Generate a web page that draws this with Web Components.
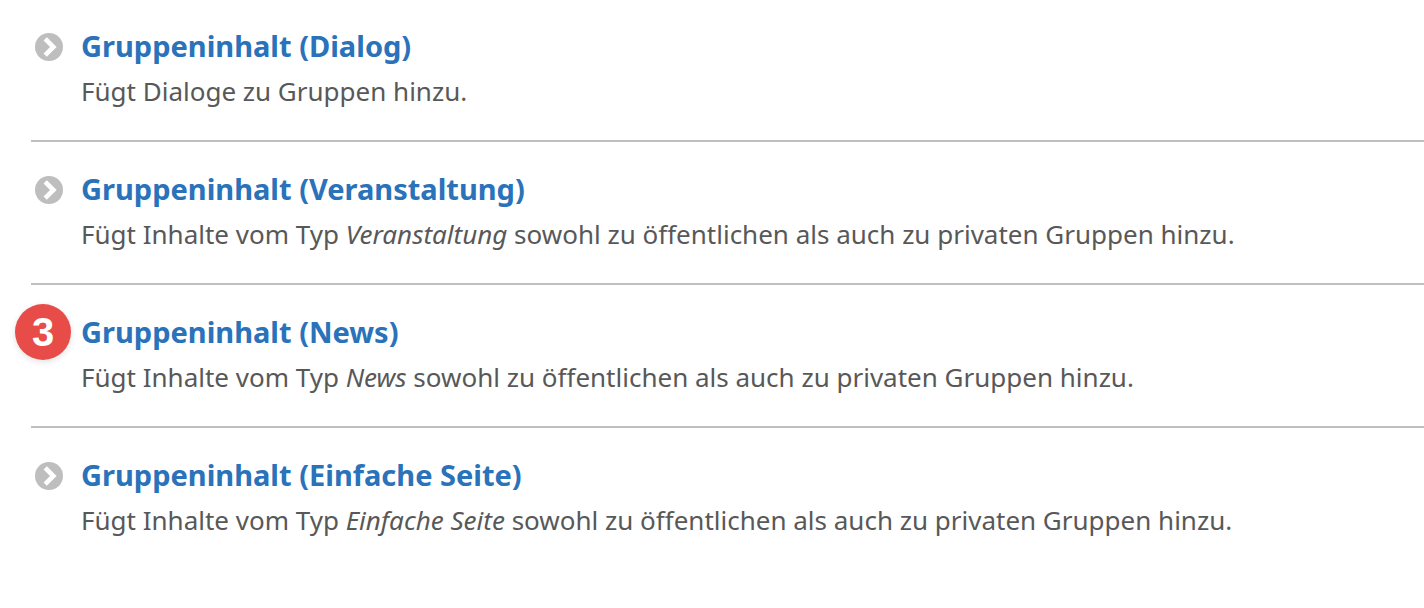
<!DOCTYPE html>
<html lang="de">
<head>
<meta charset="utf-8">
<meta name="viewport" content="width=device-width, initial-scale=1">
<title>Gruppeninhalt</title>
<style>
	body {
		margin: 0;
		background: #fff;
		color: #585858;
		font: 26px/32px "Noto Sans", "Open Sans", sans-serif;
	}
</style>
</head>
<body>
<content-list>
	<content-item href="#dialog" label="Gruppeninhalt (Dialog)">Fügt Dialoge zu Gruppen hinzu.</content-item>
	<content-item href="#veranstaltung" label="Gruppeninhalt (Veranstaltung)">Fügt Inhalte vom Typ <em>Veranstaltung</em> sowohl zu öffentlichen als auch zu privaten Gruppen hinzu.</content-item>
	<content-item href="#news" label="Gruppeninhalt (News)" step="3">Fügt Inhalte vom Typ <em>News</em> sowohl zu öffentlichen als auch zu privaten Gruppen hinzu.</content-item>
	<content-item href="#seite" label="Gruppeninhalt (Einfache Seite)">Fügt Inhalte vom Typ <em>Einfache Seite</em> sowohl zu öffentlichen als auch zu privaten Gruppen hinzu.</content-item>
</content-list>
<script>
class ContentList extends HTMLElement {
	constructor() {
		super();
		this.attachShadow({ mode: 'open' });
		this.shadowRoot.innerHTML = `
      <style>
        :host {
          display: flex;
          flex-direction: column;
          gap: 1px;
          padding-left: 31px;
        }
        ::slotted(:not(:last-child)) {
          border-bottom: 2px solid #bfbfbf;
        }
      </style>
      <slot></slot>
    `;
	}

	connectedCallback() {
		this.setAttribute('role', 'list');
	}
}

class StepBadge extends HTMLElement {
	constructor() {
		super();
		this.attachShadow({ mode: 'open' });
		this.shadowRoot.innerHTML = `
      <style>
        :host {
          display: grid;
          place-items: center;
          width: 56px;
          height: 56px;
          border-radius: 50%;
          background: #e84c49;
          box-shadow: 0 2px 6px rgb(0 0 0 / 12%);
          color: #fff;
          font: bold 40px/54px "Liberation Sans", Arial, sans-serif;
        }
      </style>
      <slot></slot>
    `;
	}
}

class ContentItem extends HTMLElement {
	constructor() {
		super();
		this.attachShadow({ mode: 'open' });
	}

	connectedCallback() {
		const step = this.getAttribute('step');
		this.setAttribute('role', 'listitem');
		this.shadowRoot.innerHTML = `
      <style>
        :host {
          display: flex;
          gap: 18px;
          padding: 31px 4px 33px;
        }
        .marker {
          position: relative;
          flex: none;
          width: 28px;
          height: 32px;
        }
        svg {
          display: block;
          width: 28px;
          height: 32px;
        }
        step-badge {
          position: absolute;
          top: -13px;
          left: -20px;
        }
        .text {
          display: flex;
          flex-direction: column;
          gap: 14px;
          min-width: 0;
        }
        a {
          align-self: start;
          color: #2a72b9;
          font-size: 29px;
          font-weight: bold;
          line-height: 30px;
          text-decoration: none;
        }
        a:hover {
          text-decoration: underline;
        }
        p {
          margin: 0;
        }
      </style>
      <div class="marker">
        ${step ? `<step-badge>${step}</step-badge>` : `
        <svg viewBox="0 0 28 32" aria-hidden="true">
          <circle cx="14" cy="16" r="14" fill="#bebebe"/>
          <path d="M11.8 9.4l6.6 6.6-6.6 6.6" fill="none" stroke="#fff" stroke-width="4.6" stroke-linecap="square"/>
        </svg>`}
      </div>
      <div class="text">
        <a href="${this.getAttribute('href')}">${this.getAttribute('label')}</a>
        <p><slot></slot></p>
      </div>
    `;
	}
}

customElements.define('content-list', ContentList);
customElements.define('step-badge', StepBadge);
customElements.define('content-item', ContentItem);
</script>
</body>
</html>
